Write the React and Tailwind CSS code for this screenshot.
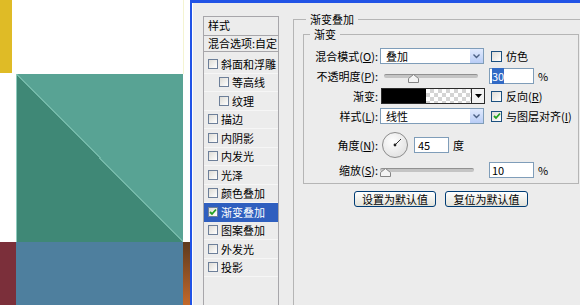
import React from "react";

const styles = [
  { label: "斜面和浮雕" },
  { label: "等高线", sub: true },
  { label: "纹理", sub: true },
  { label: "描边" },
  { label: "内阴影" },
  { label: "内发光" },
  { label: "光泽" },
  { label: "颜色叠加" },
  { label: "渐变叠加", active: true },
  { label: "图案叠加" },
  { label: "外发光" },
  { label: "投影" },
];

function Check({ checked, small }) {
  return (
    <span
      className={
        small
          ? "w-[10px] h-[10px] shrink-0 border border-[#6d7f99] bg-gradient-to-br from-[#dedcd6] to-white flex items-center justify-center"
          : "w-[11px] h-[11px] shrink-0 border border-[#1c5180] bg-gradient-to-br from-[#dedcd6] to-white flex items-center justify-center"
      }
    >
      {checked && (
        <svg width="8" height="8" viewBox="0 0 8 8">
          <path d="M1 4 L3 6 L7 1.5" fill="none" stroke="#21a121" strokeWidth="1.8" />
        </svg>
      )}
    </span>
  );
}

function Key({ text, k }) {
  // label with underlined shortcut letter, e.g. 混合模式(O):
  return (
    <span>
      {text}(<span className="underline">{k}</span>):
    </span>
  );
}

function Select({ value }) {
  return (
    <div className="w-[104px] h-[16px] flex border border-[#7f9db9] bg-white">
      <span className="flex-1 pl-[5px] leading-[14px]">{value}</span>
      <span className="w-[13px] h-full bg-gradient-to-b from-[#e1eafd] to-[#b9cdf6] flex items-center justify-center">
        <svg width="7" height="5" viewBox="0 0 7 5">
          <path d="M0.5 0.5 L3.5 3.5 L6.5 0.5" fill="none" stroke="#4d6185" strokeWidth="1.4" />
        </svg>
      </span>
    </div>
  );
}

function Slider({ pos }) {
  return (
    <div className="relative w-[94px] h-[16px]">
      <div className="absolute left-0 right-0 top-[6px] h-[4px] rounded-full bg-[#c4c4c4] border-t border-[#919191]" />
      <svg className="absolute top-[6px]" style={{ left: pos }} width="11" height="9" viewBox="0 0 11 9">
        <polygon points="0.5,8.5 0.5,4.5 5.5,0.5 10.5,4.5 10.5,8.5" fill="#f4f4f4" stroke="#858585" />
      </svg>
    </div>
  );
}

function Field({ children, selected }) {
  return (
    <div className="w-[45px] h-[16px] border border-[#7f9db9] bg-white pl-[2px] leading-[14px]">
      {selected ? <span className="bg-[#316ac5] text-white">{children}</span> : children}
    </div>
  );
}

function Label({ children }) {
  return <span className="w-[74px] shrink-0 text-right whitespace-nowrap">{children}</span>;
}

function StyleList() {
  return (
    <div className="w-[76px] shrink-0 ml-[10px] mt-[13px] h-[320px] border border-[#a7a6aa] bg-[#ececec]">
      <div className="h-[19px] border-b border-[#a7a6aa] pl-[4px] leading-[16px]">样式</div>
      <div className="h-[16px] border-b border-[#a7a6aa] pl-[4px] leading-[15px] whitespace-nowrap">混合选项:自定</div>
      <div className="pt-[3px]">
        {styles.map(s => (
          <div
            key={s.label}
            className={
              s.active
                ? "h-[18.5px] flex items-center gap-[3px] pl-[4px] bg-[#2f5fbf] text-white whitespace-nowrap"
                : s.sub
                ? "h-[18.5px] flex items-center gap-[3px] pl-[15px] border-b border-[#f6f6f6] whitespace-nowrap"
                : "h-[18.5px] flex items-center gap-[3px] pl-[4px] border-b border-[#f6f6f6] whitespace-nowrap"
            }
          >
            <Check small checked={s.active} />
            <span>{s.label}</span>
          </div>
        ))}
      </div>
    </div>
  );
}

function GradientPanel() {
  return (
    <fieldset className="shrink-0 ml-[14px] mt-[9px] w-[300px] h-[320px] border border-[#b5b5b5]">
      <legend className="ml-[12px] px-[4px] leading-[14px]">渐变叠加</legend>
      <fieldset className="ml-[9px] mt-[1px] w-[276px] border border-[#b5b5b5] pt-[7px] pb-[5px]">
        <legend className="ml-[6px] px-[4px] leading-[14px]">渐变</legend>

        <div className="h-[16px] flex items-center">
          <Label><Key text="混合模式" k="O" /></Label>
          <div className="ml-[2px]"><Select value="叠加" /></div>
          <div className="ml-[7px] flex items-center gap-[4px]">
            <Check />
            <span>仿色</span>
          </div>
        </div>

        <div className="mt-[4px] h-[16px] flex items-center">
          <Label><Key text="不透明度" k="P" /></Label>
          <div className="ml-[6px]"><Slider pos={24} /></div>
          <div className="ml-[11px]"><Field selected>30</Field></div>
          <span className="ml-[4px]">%</span>
        </div>

        <div className="mt-[4px] h-[16px] flex items-center">
          <Label>渐变:</Label>
          <div className="ml-[3px] w-[104px] h-[16px] flex border border-[#2b2b2b]">
            <span className="w-[44px] bg-black" />
            <span className="flex-1 bg-[repeating-conic-gradient(#d4d4d4_0%_25%,#ffffff_0%_50%)] bg-[length:8px_8px]" />
            <span className="w-[13px] border-l border-[#2b2b2b] bg-[#f2f2f2] flex items-center justify-center">
              <svg width="7" height="4" viewBox="0 0 7 4">
                <polygon points="0,0 7,0 3.5,4" fill="#000" />
              </svg>
            </span>
          </div>
          <div className="ml-[6px] flex items-center gap-[4px]">
            <Check />
            <span>反向(<span className="underline">R</span>)</span>
          </div>
        </div>

        <div className="mt-[4px] h-[16px] flex items-center">
          <Label><Key text="样式" k="L" /></Label>
          <div className="ml-[2px]"><Select value="线性" /></div>
          <div className="ml-[7px] flex items-center gap-[4px]">
            <Check checked />
            <span>与图层对齐(<span className="underline">I</span>)</span>
          </div>
        </div>

        <div className="mt-[8px] h-[26px] flex items-center">
          <Label><Key text="角度" k="N" /></Label>
          <div className="ml-[4px] w-[26px] h-[26px] rounded-full border border-[#8c8c8c] bg-[radial-gradient(circle_at_40%_35%,#ffffff,#d9d9d9)]">
            <svg width="24" height="24" viewBox="0 0 24 24">
              <line x1="12" y1="12" x2="18" y2="6" stroke="#333" strokeWidth="1" />
              <circle cx="12" cy="12" r="1.4" fill="#222" />
            </svg>
          </div>
          <div className="ml-[6px] w-[35px] h-[16px] border border-[#7f9db9] bg-white pl-[3px] leading-[14px]">45</div>
          <span className="ml-[4px]">度</span>
        </div>

        <div className="mt-[4px] h-[16px] flex items-center">
          <Label><Key text="缩放" k="S" /></Label>
          <div className="ml-[2px]"><Slider pos={0} /></div>
          <div className="ml-[15px]"><Field>10</Field></div>
          <span className="ml-[4px]">%</span>
        </div>
      </fieldset>

      <div className="ml-[9px] mt-[7px] w-[276px] flex justify-center gap-[9px]">
        <button className="w-[82px] h-[16px] rounded-[3px] border border-[#003c74] bg-gradient-to-b from-white to-[#e2e2da] leading-[13px]">
          设置为默认值
        </button>
        <button className="w-[83px] h-[16px] rounded-[3px] border border-[#003c74] bg-gradient-to-b from-white to-[#e2e2da] leading-[13px]">
          复位为默认值
        </button>
      </div>
    </fieldset>
  );
}

export default function App() {
  return (
    <div className="w-[580px] h-[305px] flex overflow-hidden bg-white text-[11px] text-black font-['Noto_Sans_CJK_SC','Noto_Sans',sans-serif]">
      {/* document canvas behind the dialog */}
      <div className="w-[190px] shrink-0 flex flex-col">
        <div className="h-[74px] flex">
          <div className="w-[12px] h-[73px] bg-[#dfbb26]" />
          <div className="w-[171px] bg-white" />
          <div className="w-px bg-[#f4f4d2]" />
          <div className="flex-1 bg-white" />
        </div>
        <div className="h-[168px] flex">
          <div className="w-[16px] bg-white" />
          <div className="w-[167px] border-l border-[#8ecabd] bg-[linear-gradient(to_top_right,#3f8876_49.7%,#74b9a9_49.7%,#74b9a9_50.3%,#58a394_50.3%)]" />
          <div className="flex-1 bg-white" />
        </div>
        <div className="flex-1 flex">
          <div className="w-[16px] bg-[#7b2f3a]" />
          <div className="w-[167px] bg-[#4e7f9e]" />
          <div className="flex-1 bg-gradient-to-b from-[#5e3a1e] to-[#c4692a]" />
        </div>
      </div>

      {/* layer style dialog */}
      <div className="flex-1 flex border-l-2 border-t-[3px] border-[#2153e6] bg-[#ececec] overflow-hidden">
        <div className="flex-1 flex border-l border-white">
          <StyleList />
          <GradientPanel />
        </div>
      </div>
    </div>
  );
}
